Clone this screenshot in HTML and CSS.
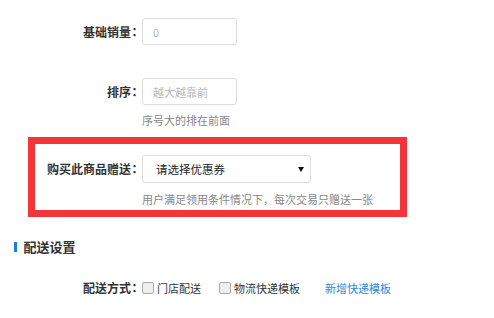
FILE: index.html
```html
<!DOCTYPE html>
<html lang="zh-CN">
<head>
<meta charset="UTF-8" />
<title>商品设置</title>
<link rel="stylesheet" href="styles.css">
</head>
<body>
<div class="form">
  <!-- 基础销量 -->
  <div class="row">
    <div class="row-label">基础销量<span class="colon">：</span></div>
    <div class="row-body">
      <input class="input" type="text" placeholder="0">
    </div>
  </div>
  <!-- 排序 -->
  <div class="row row-sort">
    <div class="row-label">排序<span class="colon">：</span></div>
    <div class="row-body">
      <input class="input" type="text" placeholder="越大越靠前">
      <div class="help">序号大的排在前面</div>
    </div>
  </div>
  <!-- 赠送优惠券 -->
  <div class="gift-box">
    <div class="row">
      <div class="row-label gift-label">购买此商品赠送<span class="colon">：</span></div>
      <div class="row-body">
        <div class="select"><span>请选择优惠券</span><i class="arrow"></i></div>
        <div class="help help-gift">用户满足领用条件情况下，每次交易只赠送一张</div>
      </div>
    </div>
  </div>
  <!-- 配送设置 -->
  <div class="section-title"><span class="bar"></span>配送设置</div>
  <div class="row row-ship">
    <div class="row-label">配送方式<span class="colon">：</span></div>
    <div class="row-body ship-opts">
      <label class="check-item"><span class="check"></span>门店配送</label>
      <label class="check-item"><span class="check"></span>物流快递模板</label>
      <a class="link" href="#">新增快递模板</a>
    </div>
  </div>
</div>
</body>
</html>
```

FILE: styles.css
```css
/* общие */
html, body {
  margin: 0; padding: 0;
  background: #fff;
  font-family: "Noto Sans CJK SC", "Liberation Sans", sans-serif;
  font-size: 11px;
  color: #333;
}
.form {
  padding-top: 18px;
}
.row {
  display: flex;
  align-items: flex-start;
}
.row-label {
  width: 138px;
  flex-shrink: 0;
  text-align: right;
  line-height: 27px;
  font-size: 12px;
  font-weight: 700;
  color: #333;
}
/* двоеточие уже, глиф по центру */
.row-label .colon {
  display: inline-block;
  width: 7px;
  text-align: center;
  font-family: "Noto Sans CJK TC", sans-serif;
  font-feature-settings: "halt";
}
.row-body {
  margin-left: 4px;
}
.input {
  display: block;
  width: 95px;
  height: 27px;
  box-sizing: border-box;
  border: 1px solid #dcdcdc;
  border-radius: 3px;
  padding: 0 10px;
  font-family: inherit;
  font-size: 11px;
  color: #333;
  outline: none;
}
.input::placeholder {
  color: #b5b5b5;
}
.row-sort {
  margin-top: 33px;
}
.help {
  margin-top: 8px;
  line-height: 14px;
  color: #888;
}

/* красная рамка */
.gift-box {
  margin: 10px 0 0 28px;
  width: 379px;
  box-sizing: border-box;
  border: 7px solid #f1353b;
  padding: 11px 0 4px 0;
}
.gift-label {
  width: 103px;
  line-height: 28px;
}
.select {
  width: 169px;
  height: 28px;
  box-sizing: border-box;
  border: 1px solid #dcdcdc;
  border-radius: 3px;
  display: flex;
  align-items: center;
  justify-content: space-between;
  padding: 0 6px 0 13px;
  font-size: 11.5px;
  color: #222;
}
.arrow {
  width: 0; height: 0;
  border-left: 3px solid transparent;
  border-right: 3px solid transparent;
  border-top: 5px solid #111;
}
.help-gift {
  margin-top: 9px;
}

/* 配送设置 */
.section-title {
  margin-top: 20px;
  padding-left: 14px;
  display: flex;
  align-items: center;
  line-height: 20px;
  font-size: 13px;
  font-weight: 700;
  color: #333;
}
.section-title .bar {
  width: 2.5px;
  height: 10px;
  background: #1a7fd8;
  margin-right: 7px;
}
.row-ship {
  margin-top: 21px;
}
.row-ship .row-label {
  line-height: 20px;
  font-weight: 600;
}
.ship-opts {
  display: flex;
  align-items: center;
  height: 20px;
  margin-left: 4px;
}
.check-item {
  display: flex;
  align-items: center;
  color: #333;
  margin-right: 18px;
}
.check-item + .check-item {
  margin-right: 25px;
}
.check {
  width: 10px;
  height: 10px;
  border: 1px solid #aaa;
  border-radius: 2px;
  background: #efefef;
  margin-right: 3px;
}
.link {
  color: #2a8ad8;
  text-decoration: none;
}
```
